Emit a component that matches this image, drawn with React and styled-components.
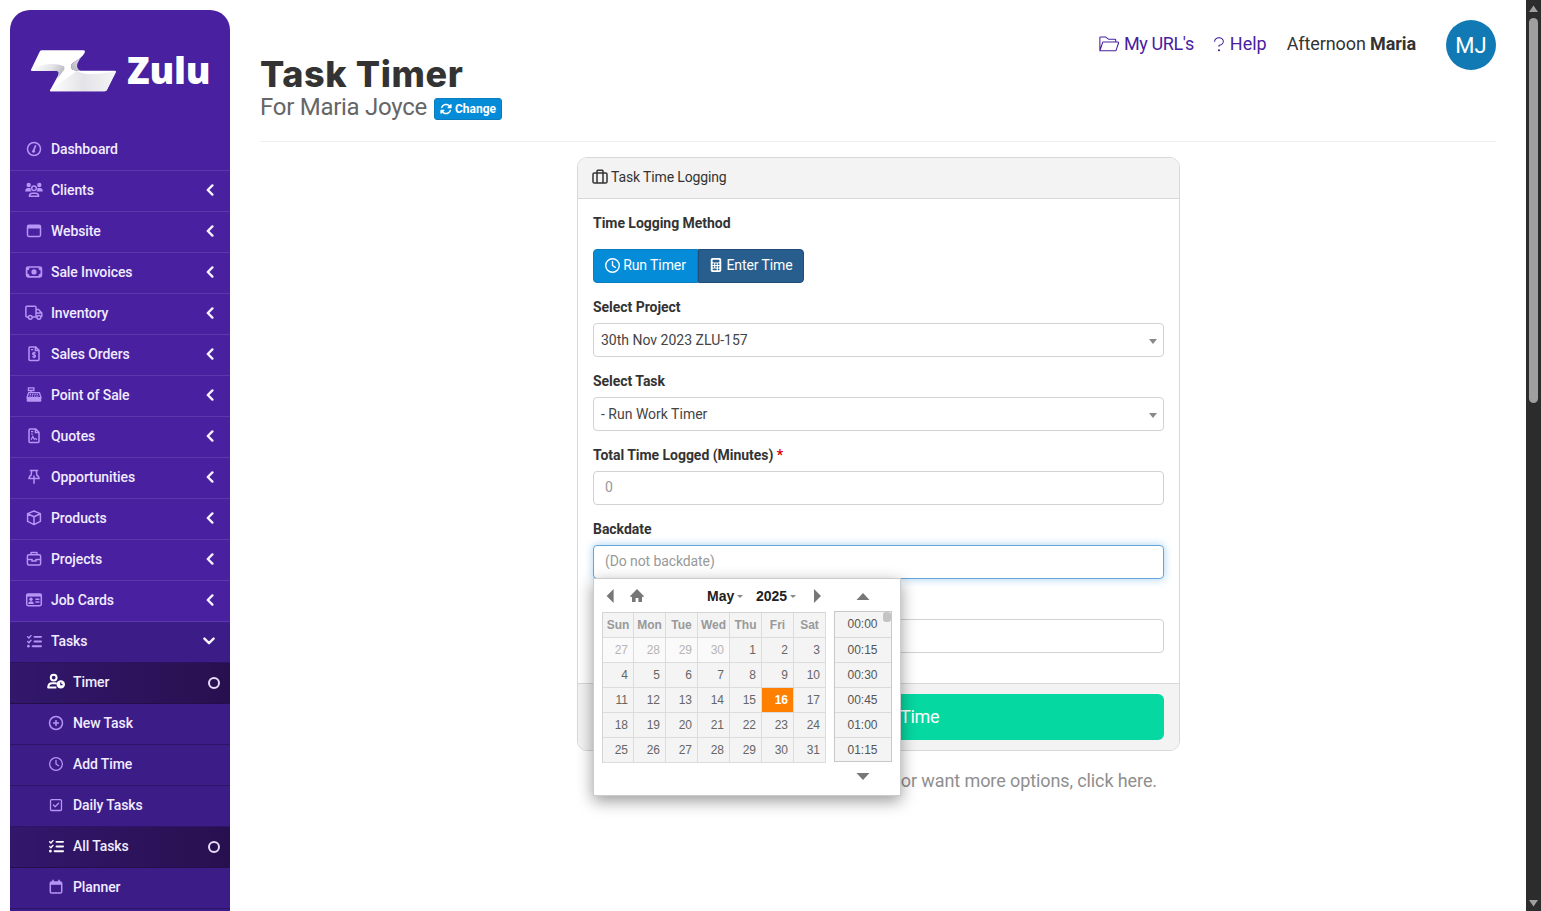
import React, { useState } from "react";
import styled, { createGlobalStyle, css } from "styled-components";
import {
  FaCalculator,
  FaListCheck,
  FaRegClock,
  FaRegSquareCheck,
  FaRotate,
} from "react-icons/fa6";
import { PiFolderOpenLight, PiQuestionMarkLight } from "react-icons/pi";

const icons = {
  dashboard: (
    <>
      <circle cx="9" cy="9" r="6.5" />
      <path d="M8.6 10.6 L10.7 5.2" strokeWidth="1.7" />
      <circle cx="8.5" cy="11.2" r="1.5" fill="currentColor" stroke="none" />
    </>
  ),
  clients: (
    <>
      <circle cx="3.7" cy="4" r="2.2" fill="currentColor" stroke="none" />
      <circle cx="14.3" cy="4" r="2.2" fill="currentColor" stroke="none" />
      <circle cx="9" cy="7.2" r="2.3" />
      <path
        d="M0.2 10.4 Q0.4 7.1 3 7.1 H5 Q5.4 7.1 5.7 7.4 Q5.6 9.2 6.4 10.4 Z M17.8 10.4 Q17.6 7.1 15 7.1 H13 Q12.6 7.1 12.3 7.4 Q12.4 9.2 11.6 10.4 Z"
        fill="currentColor"
        stroke="none"
      />
      <path d="M4.4 15.2 Q4.6 12.2 7.4 12.2 H10.6 Q13.4 12.2 13.6 15.2 Z" strokeWidth="1.6" strokeLinejoin="round" />
    </>
  ),
  website: (
    <>
      <rect x="2.5" y="3.3" width="13" height="11.2" rx="1.4" />
      <path d="M2.5 5.1 H15.5" strokeWidth="3" />
    </>
  ),
  invoices: (
    <>
      <rect x="1.6" y="4" width="14.8" height="9.8" rx="1.6" strokeWidth="1.7" />
      <circle cx="9" cy="8.9" r="2.6" fill="currentColor" stroke="none" />
      <path d="M2 4.4 H4.8 Q4.6 7 2 7.2 Z M16 4.4 V7.2 Q13.4 7 13.2 4.4 Z M2 13.4 V10.6 Q4.6 10.8 4.8 13.4 Z M16 13.4 H13.2 Q13.4 10.8 16 10.6 Z" fill="currentColor" stroke="none" />
    </>
  ),
  inventory: (
    <>
      <path d="M3.6 13 H1.9 Q0.9 13 0.9 12 V3.2 Q0.9 2.2 1.9 2.2 H10 Q11 2.2 11 3.2 V13 H7.2 M11 5.6 H13.5 L16.8 9 V13 M11 9 H16.8" />
      <circle cx="5.3" cy="13.3" r="1.9" />
      <circle cx="13.9" cy="13.3" r="1.9" />
    </>
  ),
  orders: (
    <>
      <path d="M4 3 Q4 2 5 2 H10.8 L14 5.2 V14.6 Q14 15.6 13 15.6 H5 Q4 15.6 4 14.6 Z M10.4 2 V5.6 H14" />
      <path d="M10.7 8.3 Q9 7.2 7.8 8.1 Q6.9 9.3 9 9.8 Q11.2 10.4 10.3 11.8 Q9 12.8 7.3 11.6 M9 6.8 V13.2 M6 4.6 H8.2" strokeWidth="1.2" />
    </>
  ),
  pos: (
    <>
      <path d="M3.4 1.9 H8.9 V4.5 H3.4 Z M6 4.5 V6.6" strokeWidth="1.3" />
      <path d="M3.6 6.6 H14.4 L16 11.6 H2 Z" strokeWidth="1.4" strokeLinejoin="round" />
      <path d="M4.8 8.4 H13.6 M4.4 10.2 H14" strokeDasharray="1.3 1" strokeWidth="1.2" />
      <rect x="1.7" y="11.6" width="14.6" height="4.2" rx="1" fill="currentColor" stroke="none" />
    </>
  ),
  quotes: (
    <>
      <path d="M4 3 Q4 2 5 2 H10.8 L14 5.2 V14.6 Q14 15.6 13 15.6 H5 Q4 15.6 4 14.6 Z M10.4 2 V5.6 H14" />
      <path d="M6 4.6 H8.2 M6 7 H8.2 M6.2 12.8 L7.8 9.4 L9.2 12.2 L10.4 11.4 L12 12.8" strokeWidth="1.2" />
    </>
  ),
  opportunities: (
    <path d="M4.8 2.4 H13.2 M6.7 2.4 L6.2 7 Q4.1 8.2 4 10.4 H14 Q13.9 8.2 11.8 7 L11.3 2.4 M9 7.6 V15.8" />
  ),
  products: (
    <path
      d="M9 2 L15.4 4.6 V12.4 L9 15.6 L2.6 12.4 V4.6 Z M2.6 4.8 L9 7.8 L15.4 4.8 M9 7.8 V15.6"
      strokeLinejoin="round"
    />
  ),
  projects: (
    <>
      <rect x="2.4" y="4.8" width="13.2" height="10.1" rx="1.5" />
      <path d="M6 4.7 V3 Q6 2.4 6.6 2.4 H11.4 Q12 2.4 12 3 V4.7 M2.4 9.4 H7 V11 H11 V9.4 H15.6" />
    </>
  ),
  cards: (
    <>
      <rect x="1.7" y="2.9" width="14.6" height="11.8" rx="1.4" />
      <path d="M1.5 4.3 H16.5" strokeWidth="2.6" />
      <circle cx="6" cy="8.2" r="1.7" fill="currentColor" stroke="none" />
      <path d="M3.2 13 Q3.4 10.3 6 10.3 Q8.6 10.3 8.8 13 Z" fill="currentColor" stroke="none" />
      <path d="M10.4 8.3 H14.4 M10.4 11.1 H14.4" />
    </>
  ),
  timer: (
    <>
      <circle cx="6.7" cy="4.6" r="2.9" strokeWidth="2" />
      <path d="M9.4 14.4 H1.2 Q1.4 10.2 5 10.2 H8.2 Q9.2 10.2 9.8 10.6" strokeWidth="2" strokeLinejoin="round" />
      <circle cx="13.8" cy="11.4" r="4.2" fill="currentColor" stroke="none" />
      <path d="M13.8 9.2 V11.6 H15.6" stroke="#2c1260" strokeWidth="1.1" />
    </>
  ),
  newTask: (
    <>
      <circle cx="9" cy="9" r="6.5" />
      <path d="M9 6 V12 M6 9 H12" />
    </>
  ),
  planner: (
    <>
      <rect x="3.3" y="3.9" width="11.4" height="11.2" rx="1.3" />
      <path d="M3.3 5.4 H14.7" strokeWidth="2.8" />
      <path d="M6 1.8 V4 M12 1.8 V4" strokeWidth="1.6" />
    </>
  ),
  suitcase: (
    <>
      <rect x="2" y="4.9" width="14" height="10.2" rx="1.4" />
      <path d="M6 15 V3 Q6 2.2 6.8 2.2 H11.2 Q12 2.2 12 3 V15" />
    </>
  ),
};

function Glyph({ name }) {
  return (
    <svg width="18" height="18" viewBox="0 0 18 18" fill="none" stroke="currentColor" strokeWidth="1.5">
      {icons[name]}
    </svg>
  );
}

const menu = [
  { label: "Dashboard", icon: "dashboard", leaf: true },
  { label: "Clients", icon: "clients" },
  { label: "Website", icon: "website" },
  { label: "Sale Invoices", icon: "invoices" },
  { label: "Inventory", icon: "inventory" },
  { label: "Sales Orders", icon: "orders" },
  { label: "Point of Sale", icon: "pos" },
  { label: "Quotes", icon: "quotes" },
  { label: "Opportunities", icon: "opportunities" },
  { label: "Products", icon: "products" },
  { label: "Projects", icon: "projects" },
  { label: "Job Cards", icon: "cards" },
];

const taskMenu = [
  { label: "Timer", icon: <Glyph name="timer" />, active: true },
  { label: "New Task", icon: <Glyph name="newTask" /> },
  { label: "Add Time", icon: <FaRegClock size={14} /> },
  { label: "Daily Tasks", icon: <FaRegSquareCheck size={14} /> },
  { label: "All Tasks", icon: <FaListCheck size={15} />, active: true },
  { label: "Planner", icon: <Glyph name="planner" /> },
];

const weekDays = ["Sun", "Mon", "Tue", "Wed", "Thu", "Fri", "Sat"];
const days = [27, 28, 29, 30, ...Array.from({ length: 31 }, (_, i) => i + 1)];
const times = ["00:00", "00:15", "00:30", "00:45", "01:00", "01:15"];

function Logo() {
  return (
    <svg width="87" height="43" viewBox="90 146 261 129">
      <defs>
        <linearGradient id="ribbon" x1="0" y1="0" x2="1" y2="0">
          <stop offset="0" stopColor="#ffffff" />
          <stop offset="0.5" stopColor="#e4e4e8" />
          <stop offset="1" stopColor="#f4f4f6" />
        </linearGradient>
        <linearGradient id="fold" x1="0" y1="0" x2="1" y2="0.3">
          <stop offset="0" stopColor="#ffffff" />
          <stop offset="0.6" stopColor="#e6e6ea" />
          <stop offset="1" stopColor="#bdbdc5" />
        </linearGradient>
        <linearGradient id="bend" x1="1" y1="0" x2="0" y2="1">
          <stop offset="0" stopColor="#f4f4f6" />
          <stop offset="1" stopColor="#b4b4bd" />
        </linearGradient>
      </defs>
      <path
        d="M126 150 H250 Q257 150 254 157 C240 182 214 182 213 198 C213 210 224 211 240 211 H345 Q350 211 347 217 L321 268 Q319 273 313 273 H152 Q148 273 151 268 L174 226 Q181 212 170 212 H96 Q91 212 94 206 L119 154 Q121 150 126 150 Z"
        fill="#ffffff"
      />
      <path d="M230 212 C262 228 310 220 348 212 L321 268 Q319 273 313 273 H152 Q148 273 151 268 Z" fill="url(#ribbon)" />
      <path d="M94 208 C125 190 165 186 192 198 C198 210 186 214 172 236 Q181 212 170 212 H96 Z" fill="url(#fold)" />
      <path d="M254 157 C240 182 214 182 213 198 C213 210 224 211 242 212 C222 200 232 184 254 157 Z" fill="url(#bend)" />
    </svg>
  );
}

function Sidebar() {
  return (
    <Aside>
      <Brand>
        <Logo />
        <span>Zulu</span>
      </Brand>
      {menu.map((item) => (
        <MenuRow key={item.label}>
          <IconSlot>
            <Glyph name={item.icon} />
          </IconSlot>
          {item.label}
          {!item.leaf && (
            <Chevron width="8" height="12" viewBox="0 0 8 12">
              <path d="M6.4 1.4 L1.8 6 L6.4 10.6" />
            </Chevron>
          )}
        </MenuRow>
      ))}
      <MenuRow $open>
        <IconSlot>
          <FaListCheck size={15} />
        </IconSlot>
        Tasks
        <Chevron width="12" height="8" viewBox="0 0 12 8">
          <path d="M1.4 1.6 L6 6.2 L10.6 1.6" />
        </Chevron>
      </MenuRow>
      {taskMenu.map((item) => (
        <SubRow key={item.label} $active={item.active}>
          <IconSlot>{item.icon}</IconSlot>
          {item.label}
          {item.active && <Ring />}
        </SubRow>
      ))}
      <SubRow />
    </Aside>
  );
}

function Calendar() {
  return (
    <Picker>
      <Month>
        <MonthBar>
          <Arrow width="8" height="14" viewBox="0 0 8 14">
            <path d="M7.6 0 V14 L0.6 7 Z" />
          </Arrow>
          <Home width="14" height="13" viewBox="0 0 14 13">
            <path d="M7 0 L14 7.2 L12.9 8.3 L12 7.5 V13 H8.4 V9 H5.6 V13 H2 V7.5 L1.1 8.3 L0 7.2 Z" />
          </Home>
          <MonthLabel>
            May
            <Caret />
          </MonthLabel>
          <MonthLabel>
            2025
            <Caret />
          </MonthLabel>
          <Arrow width="8" height="14" viewBox="0 0 8 14" $last>
            <path d="M0 0 V14 L7 7 Z" />
          </Arrow>
        </MonthBar>
        <DayGrid>
          {weekDays.map((day) => (
            <DayName key={day}>{day}</DayName>
          ))}
          {days.map((day, index) => (
            <Day key={index} $other={index < 4} $today={index === 19}>
              {day}
            </Day>
          ))}
        </DayGrid>
      </Month>
      <TimeColumn>
        <Arrow width="14" height="8" viewBox="0 0 14 8">
          <path d="M0.5 7 H13.5 L7 0 Z" />
        </Arrow>
        <TimeList>
          {times.map((time) => (
            <TimeItem key={time}>{time}</TimeItem>
          ))}
          <TimeThumb />
        </TimeList>
        <Arrow width="14" height="8" viewBox="0 0 14 8">
          <path d="M0.5 0 H13.5 L7 7 Z" />
        </Arrow>
      </TimeColumn>
    </Picker>
  );
}

export default function App() {
  const [minutes, setMinutes] = useState("");
  const [backdate, setBackdate] = useState("");
  return (
    <>
      <GlobalStyle />
      <Page>
        <Sidebar />
        <Main>
          <Header>
            <div>
              <Title>Task Timer</Title>
              <Subtitle>
                For Maria Joyce
                <ChangeButton>
                  <FaRotate size={12} />
                  Change
                </ChangeButton>
              </Subtitle>
            </div>
            <UserBar>
              <TopLink>
                <PiFolderOpenLight size={23} />
                <span>My URL's</span>
              </TopLink>
              <TopLink $help>
                <PiQuestionMarkLight size={20} />
                <span>Help</span>
              </TopLink>
              <Greeting>
                Afternoon <b>Maria</b>
              </Greeting>
              <Avatar>MJ</Avatar>
            </UserBar>
          </Header>
          <Card>
            <CardHeader>
              <Glyph name="suitcase" />
              Task Time Logging
            </CardHeader>
            <CardBody>
              <Label $wide>Time Logging Method</Label>
              <ButtonGroup>
                <MethodButton>
                  <FaRegClock size={15} />
                  Run Timer
                </MethodButton>
                <MethodButton $selected>
                  <FaCalculator size={14} />
                  Enter Time
                </MethodButton>
              </ButtonGroup>
              <Label>Select Project</Label>
              <Select>
                30th Nov 2023 ZLU-157
                <SelectArrow />
              </Select>
              <Label>Select Task</Label>
              <Select>
                - Run Work Timer
                <SelectArrow />
              </Select>
              <Label>
                Total Time Logged (Minutes) <Required>*</Required>
              </Label>
              <Input placeholder="0" value={minutes} onChange={(e) => setMinutes(e.target.value)} />
              <Label>Backdate</Label>
              <PickerAnchor>
                <Input
                  $focused
                  placeholder="(Do not backdate)"
                  value={backdate}
                  onChange={(e) => setBackdate(e.target.value)}
                />
                <Calendar />
              </PickerAnchor>
              <Label />
              <Input />
            </CardBody>
            <CardFooter>
              <SubmitButton>Time</SubmitButton>
            </CardFooter>
          </Card>
          <MoreOptions>or want more options, click here.</MoreOptions>
        </Main>
        <Scrollbar>
          <svg width="9" height="7" viewBox="0 0 9 7">
            <path d="M4.5 0.5 L9 7 H0 Z" />
          </svg>
          <ScrollThumb />
          <svg width="9" height="7" viewBox="0 0 9 7">
            <path d="M4.5 6.5 L9 0 H0 Z" />
          </svg>
        </Scrollbar>
      </Page>
    </>
  );
}

const GlobalStyle = createGlobalStyle`
  * {
    box-sizing: border-box;
  }
  body {
    margin: 0;
    overflow: hidden;
    background: #fff;
    color: #333;
    font-family: Roboto, "Liberation Sans", sans-serif;
    font-size: 14px;
  }
  svg {
    display: block;
    flex-shrink: 0;
  }
`;

const Page = styled.div`
  display: flex;
  height: 911px;
  overflow: hidden;
`;

const Aside = styled.nav`
  width: 220px;
  flex-shrink: 0;
  margin: 10px 0 0 10px;
  border-radius: 20px 20px 0 0;
  background: #4820a0;
  overflow: hidden;
  color: #f1ebff;
  font-weight: 500;
  letter-spacing: -0.1px;
`;

const Brand = styled.div`
  display: flex;
  align-items: center;
  height: 120px;
  padding: 1px 0 0 20px;
  letter-spacing: 0;
  span {
    margin: 0 0 2px 10px;
    color: #fff;
    font-family: "Noto Sans", sans-serif;
    font-size: 37px;
    font-weight: 900;
    line-height: 40px;
    letter-spacing: -0.2px;
  }
`;

const IconSlot = styled.span`
  display: flex;
  justify-content: center;
  width: 22px;
  margin-right: 6px;
  color: #b595f5;
`;

const MenuRow = styled.div`
  display: flex;
  align-items: center;
  height: 41px;
  padding: 0 16px 2px 13px;
  border-bottom: 1px solid #5a37ad;
  ${(props) =>
    props.$open &&
    css`
      padding-right: 15px;
      background: #3c1c87;
      border-color: #2c135f;
    `}
`;

const SubRow = styled(MenuRow)`
  padding-left: 35px;
  padding-right: 10px;
  background: ${(props) => (props.$active ? "linear-gradient(90deg, #32176c, #28104f)" : "#3c1c87")};
  border-color: ${(props) => (props.$active ? "#230f4a" : "#2e1468")};
  ${IconSlot} {
    color: ${(props) => (props.$active ? "#fff" : "#b595f5")};
  }
`;

const Chevron = styled.svg`
  margin-left: auto;
  fill: none;
  stroke: #f6f2ff;
  stroke-width: 2.4;
  stroke-linecap: round;
  stroke-linejoin: round;
`;

const Ring = styled.span`
  width: 12px;
  height: 12px;
  margin: 2px 0 0 auto;
  border: 2px solid #e6dcfa;
  border-radius: 50%;
`;

const Main = styled.main`
  flex: 1;
  padding: 0 30px;
`;

const Header = styled.header`
  display: flex;
  justify-content: space-between;
  height: 142px;
  border-bottom: 1px solid #eee;
`;

const Title = styled.h1`
  margin: 54px 0 0;
  font-family: Inter, sans-serif;
  font-size: 36px;
  font-weight: 800;
  line-height: 40px;
  letter-spacing: 0.6px;
`;

const Subtitle = styled.div`
  display: flex;
  align-items: center;
  height: 26px;
  color: #666;
  font-size: 24px;
  letter-spacing: -0.27px;
`;

const ChangeButton = styled.button`
  display: flex;
  align-items: center;
  gap: 3px;
  width: 68px;
  height: 22px;
  margin: 3px 0 0 7px;
  padding: 0 5px;
  border: 1px solid #0b7dbd;
  border-radius: 3px;
  background: #058cd9;
  color: #fff;
  font-family: inherit;
  font-size: 12px;
  font-weight: 700;
`;

const UserBar = styled.div`
  display: flex;
  align-items: center;
  height: 50px;
  margin-top: 20px;
  font-size: 18px;
`;

const TopLink = styled.a`
  display: flex;
  align-items: center;
  gap: 4px;
  margin-right: ${(props) => (props.$help ? "20px" : "15px")};
  padding-bottom: 3px;
  color: #4820a0;
  letter-spacing: ${(props) => (props.$help ? "0" : "-0.38px")};
  svg {
    margin-right: ${(props) => (props.$help ? "-3px" : "0")};
  }
`;

const Greeting = styled.span`
  padding-bottom: 3px;
  letter-spacing: -0.1px;
`;

const Avatar = styled.div`
  display: flex;
  align-items: center;
  justify-content: center;
  width: 50px;
  height: 50px;
  margin-left: 30px;
  border-radius: 50%;
  background: #117ab5;
  color: #fff;
  font-size: 22px;
`;

const Card = styled.section`
  width: 603px;
  margin: 15px 0 0 317px;
  border: 1px solid #d8d8d8;
  border-radius: 10px;
`;

const CardHeader = styled.div`
  display: flex;
  align-items: center;
  gap: 2px;
  height: 41px;
  padding: 0 13px 2px;
  border-bottom: 1px solid #d8d8d8;
  border-radius: 9px 9px 0 0;
  background: #f3f3f3;
  letter-spacing: -0.14px;
`;

const CardBody = styled.div`
  height: 484px;
  padding: 14px 15px 0;
`;

const Label = styled.div`
  height: 20px;
  margin-bottom: ${(props) => (props.$wide ? "16px" : "6px")};
  font-weight: 700;
  line-height: 20px;
  letter-spacing: -0.04px;
`;

const Required = styled.span`
  color: #d00;
`;

const ButtonGroup = styled.div`
  display: flex;
  margin-bottom: 14px;
`;

const MethodButton = styled.button`
  display: flex;
  align-items: center;
  justify-content: center;
  gap: 3px;
  width: ${(props) => (props.$selected ? "106px" : "105px")};
  height: 34px;
  padding: 0 0 2px;
  border: 1px solid ${(props) => (props.$selected ? "#204d7a" : "#0b7dbd")};
  border-radius: ${(props) => (props.$selected ? "0 4px 4px 0" : "4px 0 0 4px")};
  background: ${(props) => (props.$selected ? "#285e8e" : "#058cd9")};
  color: #fff;
  font-family: inherit;
  font-size: 14px;
  letter-spacing: -0.1px;
`;

const fieldBox = css`
  width: 100%;
  height: 34px;
  margin-bottom: 14px;
  border: 1px solid #d2d2d2;
  border-radius: 4px;
  background: #fff;
`;

const Select = styled.div`
  ${fieldBox}
  display: flex;
  align-items: center;
  justify-content: space-between;
  padding: 0 6px 0 7px;
  color: #444;
`;

const SelectArrow = styled.span`
  margin-top: 3px;
  border: 4px solid transparent;
  border-top: 5px solid #888;
  border-bottom: 0;
`;

const Input = styled.input`
  ${fieldBox}
  display: block;
  padding: 0 11px 2px;
  outline: none;
  font-family: inherit;
  font-size: 14px;
  letter-spacing: -0.1px;
  &::placeholder {
    color: #999;
  }
  ${(props) =>
    props.$focused &&
    css`
      border-color: #66a5d8;
      box-shadow: 0 0 8px rgba(102, 175, 233, 0.6);
    `}
`;

const PickerAnchor = styled.div`
  position: relative;
`;

const Picker = styled.div`
  position: absolute;
  top: 33px;
  left: 0;
  z-index: 2;
  display: flex;
  gap: 8px;
  width: 308px;
  height: 218px;
  padding: 8px;
  border: 1px solid #ccc;
  background: #fff;
  box-shadow: 0 5px 15px rgba(0, 0, 0, 0.4);
  color: #666;
  font-family: "Liberation Sans", Arial, sans-serif;
  font-size: 12px;
`;

const Month = styled.div`
  width: 224px;
`;

const MonthBar = styled.div`
  display: flex;
  align-items: center;
  height: 25px;
  padding: 0 4px 7px;
`;

const Arrow = styled.svg`
  margin-left: ${(props) => (props.$last ? "auto" : "0")};
  fill: #777;
`;

const Home = styled.svg`
  margin: 0 49px 1px 16px;
  fill: #777;
`;

const MonthLabel = styled.span`
  display: flex;
  align-items: center;
  width: 49px;
  padding-left: 14px;
  color: #222;
  font-size: 14px;
  font-weight: 700;
  & + & {
    width: 54px;
  }
`;

const Caret = styled.span`
  margin-left: 3px;
  border: 3px solid transparent;
  border-top-color: #888;
  border-bottom: 0;
`;

const DayGrid = styled.div`
  display: grid;
  grid-template-columns: 31px repeat(6, 32px);
  border: solid #d4d4d4;
  border-width: 1px 0 0 1px;
`;

const cell = css`
  height: 25px;
  border: solid #dcdcdc;
  border-width: 0 1px 1px 0;
  background: #f4f4f4;
  line-height: 24px;
`;

const DayName = styled.span`
  ${cell}
  color: #999;
  font-weight: 700;
  text-align: center;
`;

const Day = styled.span`
  ${cell}
  padding-right: 5px;
  text-align: right;
  ${(props) =>
    props.$other &&
    css`
      background: #fafafa;
      color: #b5b5b5;
    `}
  ${(props) =>
    props.$today &&
    css`
      background: #ff8000;
      color: #fff;
      font-weight: 700;
    `}
`;

const TimeColumn = styled.div`
  display: flex;
  flex-direction: column;
  align-items: center;
  width: 58px;
  padding-top: 6px;
`;

const TimeList = styled.div`
  position: relative;
  width: 58px;
  height: 151px;
  margin: 10px 0 11px;
  border: 1px solid #c8c8c8;
  overflow: hidden;
`;

const TimeItem = styled.div`
  height: 25px;
  padding-right: 1px;
  border-bottom: 1px solid #dadada;
  background: #f4f4f4;
  color: #555;
  line-height: 25px;
  text-align: center;
  &:first-child {
    height: 26px;
  }
`;

const TimeThumb = styled.span`
  position: absolute;
  top: 0;
  right: 0;
  width: 8px;
  height: 10px;
  border-radius: 3px;
  background: #c4c4c4;
`;

const CardFooter = styled.div`
  padding: 10px 15px;
  border-top: 1px solid #d8d8d8;
  border-radius: 0 0 9px 9px;
  background: #f3f3f3;
`;

const SubmitButton = styled.button`
  display: block;
  width: 100%;
  height: 46px;
  padding: 0 0 1px 307px;
  border: 0;
  border-radius: 6px;
  background: #06d8a2;
  color: #fff;
  font-family: inherit;
  font-size: 18px;
  letter-spacing: -0.3px;
  text-align: left;
`;

const MoreOptions = styled.p`
  margin: 19px 339px 0 0;
  color: #8f8f8f;
  font-size: 18px;
  line-height: 22px;
  letter-spacing: -0.1px;
  text-align: right;
`;

const Scrollbar = styled.div`
  display: flex;
  flex-direction: column;
  align-items: center;
  width: 15px;
  padding: 5px 0 4px;
  background: #2c2c2c;
  svg {
    fill: #9f9f9f;
  }
  svg:last-child {
    margin-top: auto;
  }
`;

const ScrollThumb = styled.div`
  width: 9px;
  height: 385px;
  margin-top: 6px;
  border-radius: 5px;
  background: #9f9f9f;
`;
